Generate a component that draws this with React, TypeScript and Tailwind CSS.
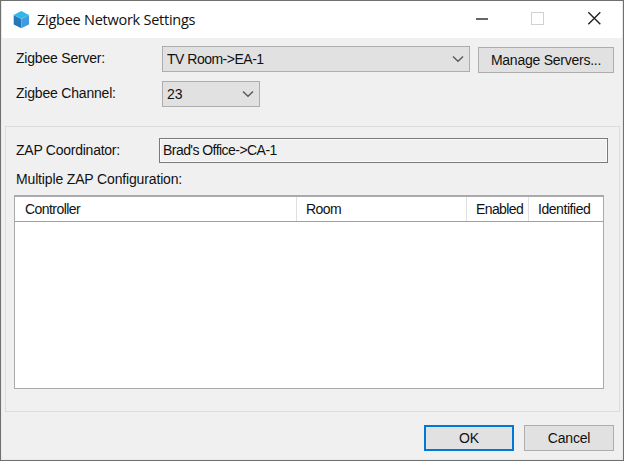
import React from 'react';

const COLUMNS = [
    { label: 'Controller', className: 'w-[282px] pl-[10px] border-r border-[#e0e0e0] tracking-[-0.55px]' },
    { label: 'Room', className: 'w-[170px] pl-[9px] border-r border-[#e0e0e0] tracking-[-0.6px]' },
    { label: 'Enabled', className: 'w-[62px] pl-[9px] border-r border-[#e0e0e0] tracking-[-0.6px]' },
    { label: 'Identified', className: 'grow pl-[9px] tracking-[-0.45px]' }
];

function CubeIcon() {
    return (
        <svg width="17" height="18" viewBox="0 0 17 18" className="shrink-0">
            <path d="M8.3 0 16 3.9 8.3 7.9 0.7 3.9Z" fill="#2fb8e8" />
            <path d="M0.7 3.9 8.3 7.9V17.3L0.7 13.4Z" fill="#2577b8" />
            <path d="M16 3.9 8.3 7.9V17.3L16 13.4Z" fill="#429be0" />
            <path d="M0.7 3.9 8.3 7.9 16 3.9" fill="none" stroke="#5cc4ee" strokeWidth="0.6" />
        </svg>
    );
}

function Select({ value, className }: { value: string; className: string }) {
    return (
        <div className={`flex h-[26px] items-center justify-between border border-[#adadad] bg-[#e1e1e1] pl-[4px] pr-[5px] ${className}`}>
            <span>{value}</span>
            <svg width="12" height="8" viewBox="0 0 12 8" fill="none" stroke="#5c5c5c" strokeWidth="1.5">
                <path d="M1 1.5 6 6.3 11 1.5" />
            </svg>
        </div>
    );
}

function TitleBar() {
    return (
        <div className="flex h-[37px] items-center bg-white pl-[11px]">
            <CubeIcon />
            <h1 className="ml-[7px] grow whitespace-nowrap pt-px font-['Open_Sans',sans-serif] text-[14.5px] leading-5 tracking-[-0.25px]">
                Zigbee Network Settings
            </h1>
            <svg width="146" height="37" viewBox="0 0 146 37" fill="none">
                <path d="M0 18H12" stroke="#333" strokeWidth="1.5" />
                <rect x="55.5" y="11.5" width="12" height="12" stroke="#d0d0d0" />
                <path d="M112.3 11.3 124.3 23.3M124.3 11.3 112.3 23.3" stroke="#222" strokeWidth="1.4" />
            </svg>
        </div>
    );
}

export default function App() {
    return (
        <div className="relative h-[461px] w-[624px] overflow-hidden border border-[#707070] bg-[#f0f0f0] font-['Liberation_Sans',Arial,sans-serif] text-[14px] leading-[18px] text-[#111] whitespace-nowrap">
            {/* bit of the desktop showing behind the top edge */}
            <span className="absolute -top-px left-[284px] h-px w-3 bg-[#35531c]" />
            <div className="flex h-full flex-col border-x border-b border-[#e9e9e9]">
                <TitleBar />

                <div className="flex items-start pl-[14px] pt-2">
                    <div className="w-[146px] pt-[3px] tracking-[-0.2px]">Zigbee Server:</div>
                    <Select value="TV Room->EA-1" className="w-[308px] tracking-[-0.5px]" />
                    <button className="ml-2 mt-px h-[26px] w-[136px] border border-[#adadad] bg-[#e1e1e1] pb-px tracking-[-0.25px]">
                        Manage Servers...
                    </button>
                </div>
                <div className="flex items-start pl-[14px] pt-2">
                    <div className="w-[146px] pt-[3px] tracking-[-0.2px]">Zigbee Channel:</div>
                    <Select value="23" className="w-[98px]" />
                </div>

                <div className="ml-[3px] mt-[19px] h-[286px] w-[615px] border border-[#dcdcdc] pl-2 pt-[11px]">
                    <div className="flex items-start pl-[2px]">
                        <div className="w-[143px] pt-[3px] tracking-[-0.25px]">ZAP Coordinator:</div>
                        <div className="h-[25px] w-[449px] border border-[#7a7a7a] pl-[3px] leading-[23px] tracking-[-0.55px] shadow-[inset_0_0_0_1px_#fafafa]">
                            Brad's Office-&gt;CA-1
                        </div>
                    </div>
                    <div className="mt-[7px] pl-[2px] tracking-[-0.15px]">Multiple ZAP Configuration:</div>
                    <div className="mt-[7px] h-[194px] w-[590px] border border-t-2 border-[#a9a9ae] bg-white">
                        <div className="flex h-[25px] border-b border-[#a0a0a0] leading-[25px]">
                            {COLUMNS.map((column) => (
                                <div key={column.label} className={column.className}>{column.label}</div>
                            ))}
                        </div>
                    </div>
                </div>

                <div className="mt-[13px] flex justify-end gap-[10px] pr-2">
                    <button className="h-[26px] w-[90px] border-2 border-[#0078d7] bg-[#e1e1e1]">OK</button>
                    <button className="h-[26px] w-[90px] border border-[#adadad] bg-[#e1e1e1] tracking-[-0.2px]">Cancel</button>
                </div>
            </div>
        </div>
    );
}
